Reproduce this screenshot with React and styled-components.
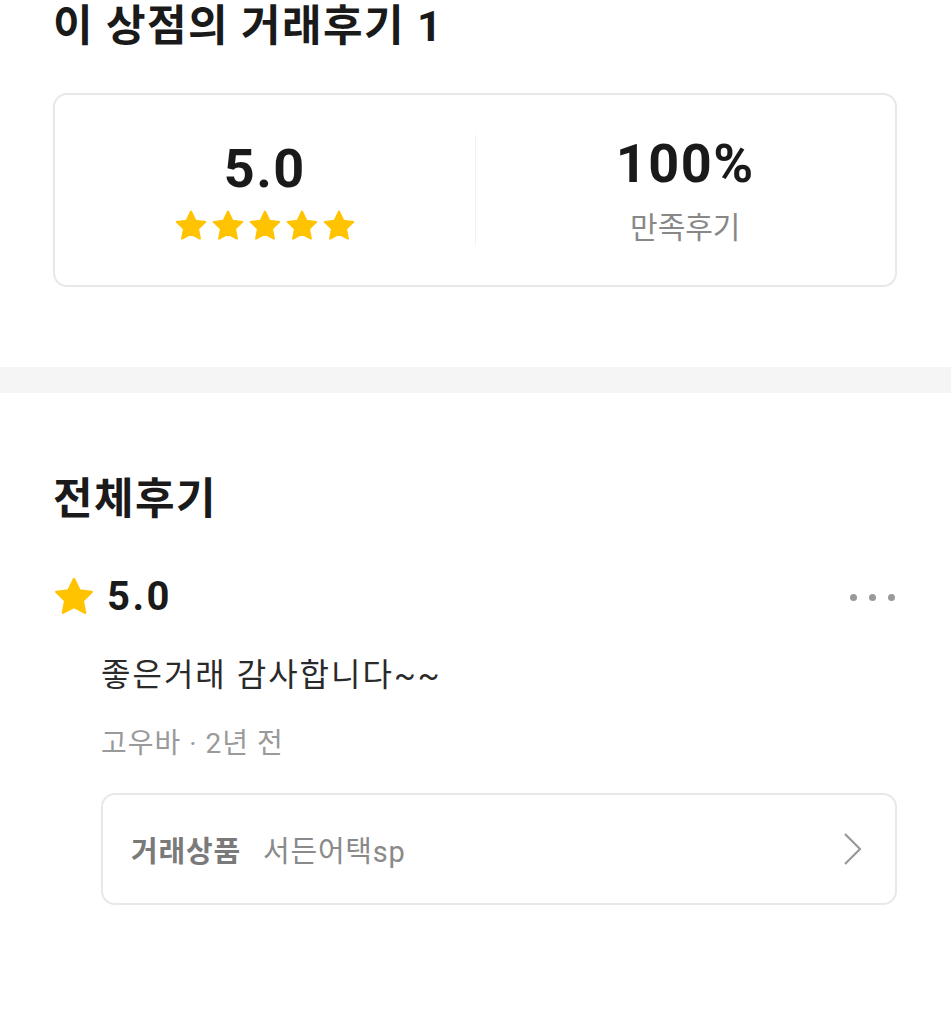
import styled, { createGlobalStyle } from "styled-components"

const GlobalStyle = createGlobalStyle`
  body {
    margin: 0;
    background: #fff;
    font-family: Roboto, "Noto Sans CJK KR", sans-serif;
    color: #1a1a1a;
  }
`

const Section = styled.section`
  padding: ${props => props.$pad};
`

const Title = styled.h2`
  margin: 0;
  font-size: 43px;
  line-height: 52px;
  font-weight: 700;
  letter-spacing: 1.4px;
  color: #1a1a1a;
`

const SummaryCard = styled.div`
  margin-top: 41px;
  height: 190px;
  border: 2px solid #e8e8e8;
  border-radius: 14px;
  display: flex;
  align-items: center;
`

const SummaryCol = styled.div`
  flex: 1;
  display: flex;
  flex-direction: column;
  align-items: center;
  gap: ${props => props.$gap}px;
`

const Divider = styled.div`
  width: 1px;
  height: 110px;
  background: #f0f0f0;
`

const BigNumber = styled.div`
  font-size: 54px;
  line-height: 62px;
  font-weight: 700;
  letter-spacing: 1.5px;
  color: #1a1a1a;
`

const Stars = styled.div`
  display: flex;
  gap: 3px;
`

const Caption = styled.div`
  font-size: 30px;
  line-height: 40px;
  color: #888;
`

const Band = styled.div`
  height: 26px;
  background: #f5f5f5;
`

const ReviewHead = styled.div`
  margin-top: 48px;
  display: flex;
  align-items: center;
  justify-content: space-between;
`

const Score = styled.div`
  display: flex;
  align-items: center;
  gap: 12px;
  font-size: 40px;
  line-height: 48px;
  font-weight: 700;
  letter-spacing: 2.5px;
  color: #1a1a1a;
`

const MoreDots = styled.div`
  display: flex;
  gap: 12px;
  padding-right: 2px;

  span {
    width: 7px;
    height: 7px;
    border-radius: 50%;
    background: #999;
  }
`

const ReviewBody = styled.div`
  padding-left: 48px;
`

const ReviewText = styled.p`
  margin: 32px 0 0;
  font-size: 32px;
  line-height: 44px;
  letter-spacing: 2px;
  color: #2a2a2a;
`

const Meta = styled.p`
  margin: 28px 0 0;
  font-size: 28px;
  line-height: 38px;
  letter-spacing: 1px;
  color: #9a9a9a;
`

const ProductBox = styled.div`
  margin-top: 30px;
  height: 108px;
  border: 2px solid #e8e8e8;
  border-radius: 14px;
  padding: 0 31px 0 28px;
  display: flex;
  align-items: center;
  gap: 22px;
  font-size: 29px;
  letter-spacing: 0.8px;
  color: #8a8a8a;

  b {
    font-weight: 700;
    color: #7a7a7a;
  }
`

const Chevron = styled.svg`
  margin-left: auto;
`

const Star = ({ size = 34 }) => (
  <svg width={size} height={size} viewBox="0 0 24 24">
    <path
      d="M12 1.8l3.1 6.4 7 .9-5.1 4.9 1.3 7-6.3-3.4-6.3 3.4 1.3-7L1.9 9.1l7-.9z"
      fill="#ffc300"
      stroke="#ffc300"
      strokeWidth="1.4"
      strokeLinejoin="round"
    />
  </svg>
)

const App = () => (
  <>
    <GlobalStyle />
    <Section $pad="0 54px 80px 53px">
      <Title>이 상점의 거래후기 1</Title>
      <SummaryCard>
        <SummaryCol $gap={9}>
          <BigNumber>5.0</BigNumber>
          <Stars>
            {[0, 1, 2, 3, 4].map(i => <Star key={i} />)}
          </Stars>
        </SummaryCol>
        <Divider />
        <SummaryCol $gap={13}>
          <BigNumber>100%</BigNumber>
          <Caption>만족후기</Caption>
        </SummaryCol>
      </SummaryCard>
    </Section>
    <Band />
    <Section $pad="80px 54px 0 53px">
      <Title>전체후기</Title>
      <ReviewHead>
        <Score>
          <Star size={42} />
          5.0
        </Score>
        <MoreDots>
          <span /><span /><span />
        </MoreDots>
      </ReviewHead>
      <ReviewBody>
        <ReviewText>좋은거래 감사합니다~~</ReviewText>
        <Meta>고우바 · 2년 전</Meta>
        <ProductBox>
          <b>거래상품</b>
          <span>서든어택sp</span>
          <Chevron width="22" height="34" viewBox="0 0 22 34">
            <path d="M3 2l15 15L3 32" fill="none" stroke="#999" strokeWidth="2.2" />
          </Chevron>
        </ProductBox>
      </ReviewBody>
    </Section>
  </>
)

export default App
